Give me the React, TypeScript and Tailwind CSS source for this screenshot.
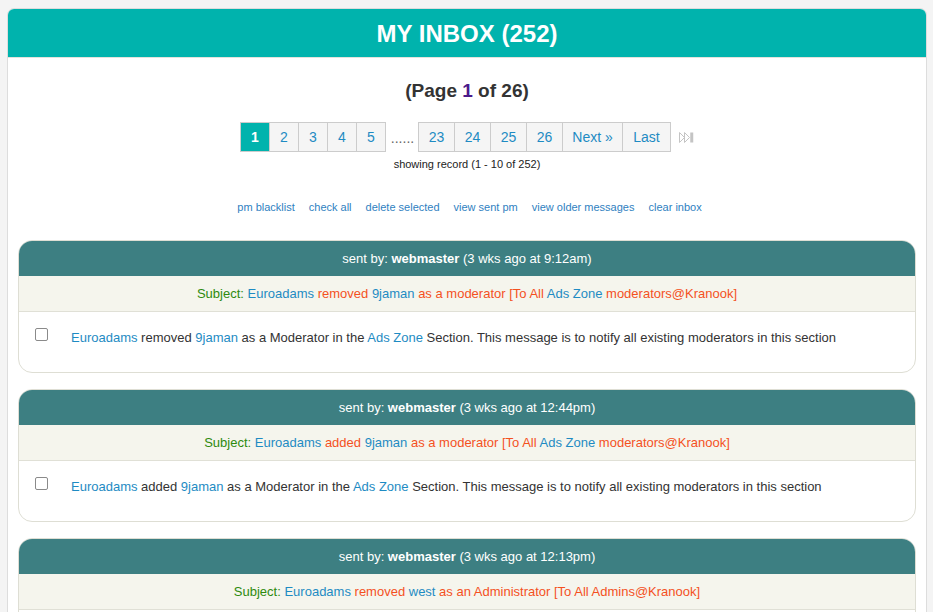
const blue = 'text-[#1e8bc3]'
const orange = 'text-[#f4511e]'

interface Msg {
    time: string
    subject: React.ReactNode
    body: React.ReactNode
}

const messages: Msg[] = [
    {
        time: '3 wks ago at 9:12am',
        subject: (
            <>
                <span className={blue}>Euroadams</span> <span className={orange}>removed</span>{' '}
                <span className={blue}>9jaman</span> <span className={orange}>as a moderator [To All</span>{' '}
                <span className={blue}>Ads Zone</span> <span className={orange}>moderators@Kranook]</span>
            </>
        ),
        body: (
            <>
                <span className={blue}>Euroadams</span> removed <span className={blue}>9jaman</span> as a Moderator in the{' '}
                <span className={blue}>Ads Zone</span> Section. This message is to notify all existing moderators in this section
            </>
        ),
    },
    {
        time: '3 wks ago at 12:44pm',
        subject: (
            <>
                <span className={blue}>Euroadams</span> <span className={orange}>added</span>{' '}
                <span className={blue}>9jaman</span> <span className={orange}>as a moderator [To All</span>{' '}
                <span className={blue}>Ads Zone</span> <span className={orange}>moderators@Kranook]</span>
            </>
        ),
        body: (
            <>
                <span className={blue}>Euroadams</span> added <span className={blue}>9jaman</span> as a Moderator in the{' '}
                <span className={blue}>Ads Zone</span> Section. This message is to notify all existing moderators in this section
            </>
        ),
    },
    {
        time: '3 wks ago at 12:13pm',
        subject: (
            <>
                <span className={blue}>Euroadams</span> <span className={orange}>removed</span>{' '}
                <span className={blue}>west</span> <span className={orange}>as an Administrator [To All Admins@Kranook]</span>
            </>
        ),
        body: (
            <>
                <span className={blue}>Euroadams</span> removed <span className={blue}>west</span> as an Administrator. This message is to notify all existing administrators
            </>
        ),
    },
]

const pages = ['2', '3', '4', '5']
const lastPages = ['23', '24', '25', '26']
const links = ['pm blacklist', 'check all', 'delete selected', 'view sent pm', 'view older messages', 'clear inbox']

const PageBtn = ({ label, w }: { label: string; w: string }) => (
    <a className={`${w} h-[30px] flex items-center justify-center border border-[#cccccc] -ml-px bg-[#f5f5f5] text-[14px] text-[#1e8bc3]`}>
        {label}
    </a>
)

const App = () => {
    return (
        <div className="min-h-screen bg-[#f4f4f4] pt-[8px] pl-[7px] pr-[6px] font-['Liberation_Sans',Arial,sans-serif]">
            <div className="bg-white border border-[#dddddd] rounded-t-[7px] overflow-hidden min-h-[620px]">
                <div className="h-[49px] pt-[2px] bg-[#00b3ad] flex items-center justify-center border-b border-[#e3e3dc]">
                    <h1 className="text-white font-bold text-[24px] leading-none">MY INBOX (252)</h1>
                </div>

                <div className="pt-[21px] text-center">
                    <h2 className="text-[19px] leading-[24px] font-bold text-[#333333]">
                        (Page <span className="text-[#4b1a8b]">1</span> of 26)
                    </h2>
                </div>

                <div className="mt-[19px] flex justify-center items-center">
                    <div className="flex items-center pl-[1px]">
                        <span className="w-[30px] h-[30px] -ml-px flex items-center justify-center bg-[#00b3ad] border border-[#cccccc] text-white font-bold text-[14px]">1</span>
                        {pages.map((p) => (
                            <PageBtn key={p} label={p} w="w-[30px]" />
                        ))}
                        <span className="w-[33px] text-center text-[14px] text-[#666666] pt-[2px]">......</span>
                        {lastPages.map((p) => (
                            <PageBtn key={p} label={p} w="w-[37px]" />
                        ))}
                        <PageBtn label="Next »" w="w-[61px]" />
                        <PageBtn label="Last" w="w-[49px]" />
                        <svg className="ml-[8px]" width="15" height="11" viewBox="0 0 15 11" fill="none" stroke="#c4c4c4" strokeWidth="1">
                            <path d="M0.5 0.5 L5.5 5.5 L0.5 10.5 Z" />
                            <path d="M5.5 0.5 L10.5 5.5 L5.5 10.5 Z" />
                            <path d="M12 0.5 V10.5 M13.5 0.5 V10.5" strokeWidth="1.5" />
                        </svg>
                    </div>
                </div>

                <p className="mt-[5px] text-center text-[11px] leading-[14px] text-[#222222]">showing record (1 - 10 of 252)</p>

                <div className="mt-[29px] flex justify-center gap-[14px] text-[11px] leading-[14px] text-[#2f7fc1] pl-[5px]">
                    {links.map((l) => (
                        <a key={l}>{l}</a>
                    ))}
                </div>

                <div className="mt-[26px] px-[10px] flex flex-col gap-[16px]">
                    {messages.map((m, i) => (
                        <div key={i} className="border border-[#deded4] rounded-[14px] overflow-hidden bg-white">
                            <div className="h-[35px] bg-[#3d7f82] flex items-center justify-center text-[13px] text-white">
                                <span>
                                    sent by: <b>webmaster</b> ({m.time})
                                </span>
                            </div>
                            <div className="h-[36px] pt-[1px] bg-[#f5f5ed] border-b border-[#e0e0d6] flex items-center justify-center text-[13px]">
                                <span>
                                    <span className="text-[#2e8a0e]">Subject:</span> {m.subject}
                                </span>
                            </div>
                            <div className="flex items-start pl-[16px] pt-[16px] pb-[24px] text-[13px] leading-[20px] text-[#333333]">
                                <span className="w-[13px] h-[13px] border border-[#8a8a8a] rounded-[2px] bg-white shrink-0" />
                                <p className="ml-[23px] mt-[0px]">{m.body}</p>
                            </div>
                        </div>
                    ))}
                </div>
            </div>
        </div>
    )
}

export default App
